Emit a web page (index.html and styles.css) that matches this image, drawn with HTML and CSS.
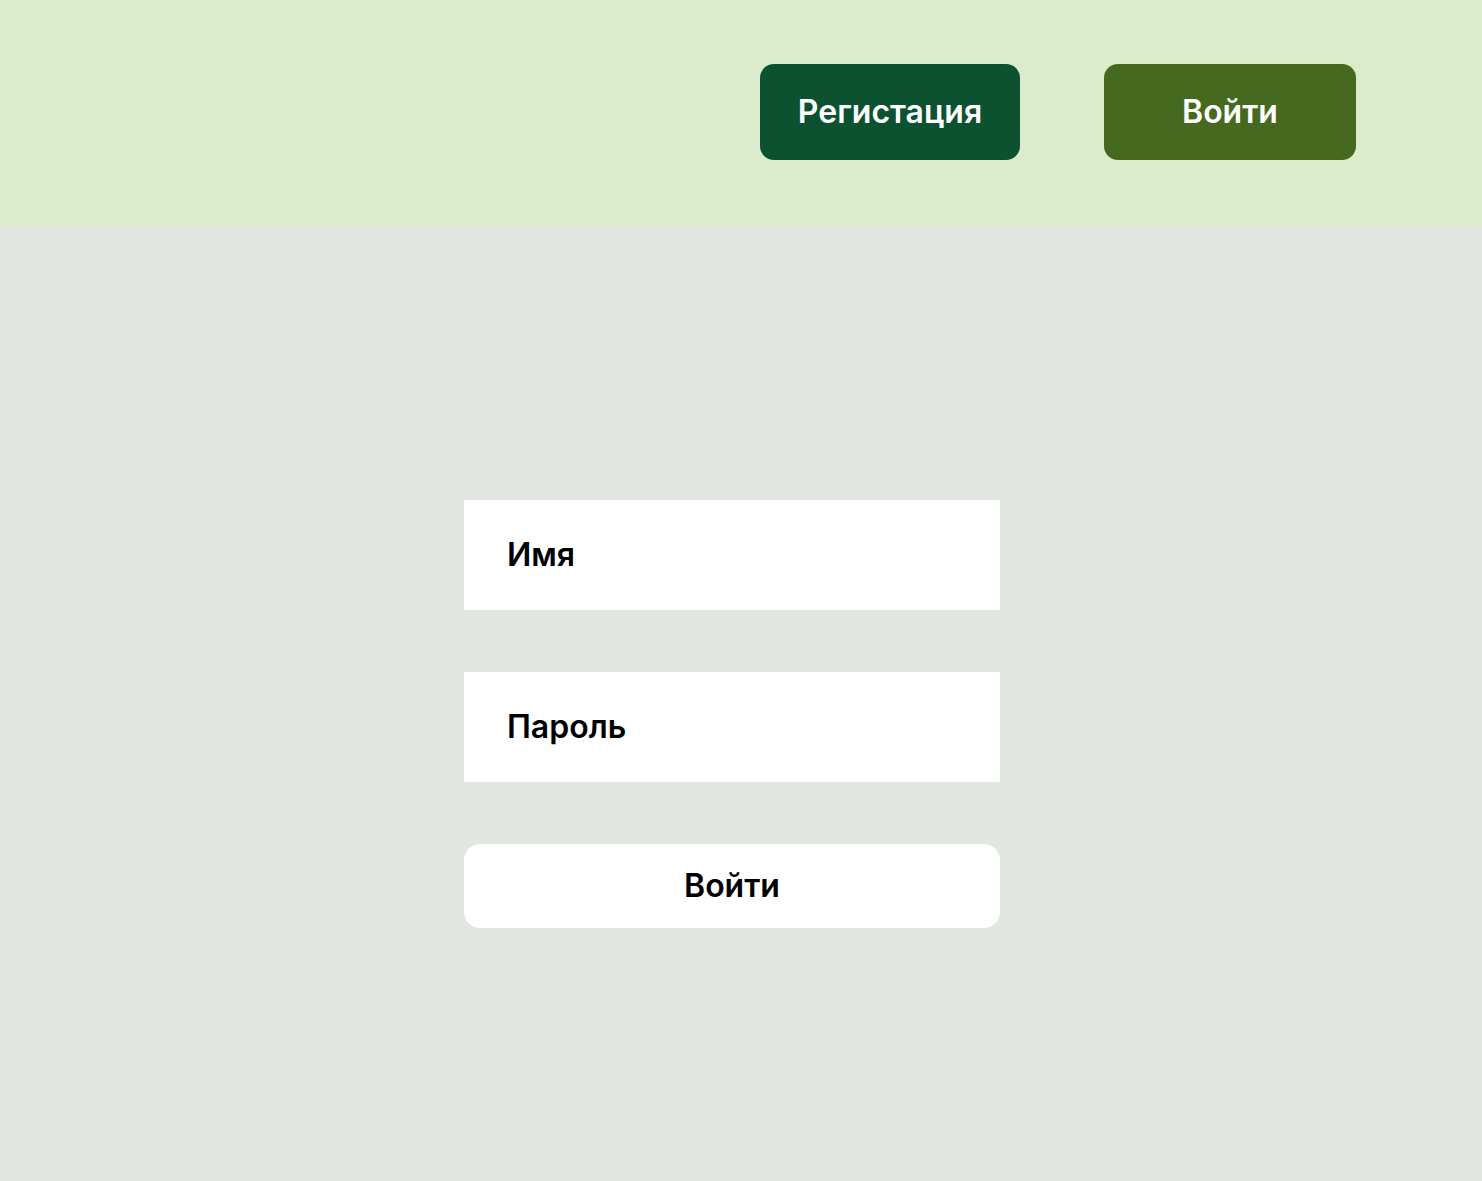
FILE: index.html
```html
<!DOCTYPE html>
<html lang="ru">
<head>
<meta charset="utf-8">
<title>Вход</title>
<link rel="stylesheet" href="styles.css">
</head>
<body>
<header class="header">
  <button class="hbtn hbtn-reg">Регистация</button>
  <button class="hbtn hbtn-login">Войти</button>
</header>
<main class="main">
  <form class="form">
    <div class="field">Имя</div>
    <div class="field">Пароль</div>
    <button class="submit" type="button">Войти</button>
  </form>
</main>
</body>
</html>
```
FILE: styles.css
```css
html, body {
  margin: 0;
  padding: 0;
  height: 100%;
}
body {
  font-family: Inter, "Noto Sans", sans-serif;
  background: #e1e6e0;
  display: flex;
  flex-direction: column;
}
.header {
  height: 226px;
  box-sizing: border-box;
  background: #dcebcb;
  display: flex;
  justify-content: flex-end;
  align-items: flex-start;
  padding: 64px 126px 0 0;
  gap: 84px;
}
.hbtn {
  height: 96px;
  border: none;
  border-radius: 14px;
  color: #fff;
  font-family: inherit;
  font-size: 32px;
  font-weight: 600;
  padding: 0 0 2px;
}
.hbtn-reg {
  width: 260px;
  background: #0d5230;
}
.hbtn-login {
  width: 252px;
  background: #45691f;
}
.main {
  flex: 1;
  background: #e1e6e0;
}
.form {
  margin: 274px 0 0 464px;
  width: 536px;
  display: flex;
  flex-direction: column;
  gap: 62px;
}
.field {
  height: 110px;
  background: #fff;
  box-sizing: border-box;
  padding: 0 0 1px 43px;
  display: flex;
  align-items: center;
  font-size: 32px;
  font-weight: 600;
  color: #000;
}
.submit {
  height: 84px;
  border: none;
  border-radius: 16px;
  background: #fff;
  color: #000;
  font-family: inherit;
  font-size: 32px;
  font-weight: 600;
  padding: 0 0 2px;
}
```
